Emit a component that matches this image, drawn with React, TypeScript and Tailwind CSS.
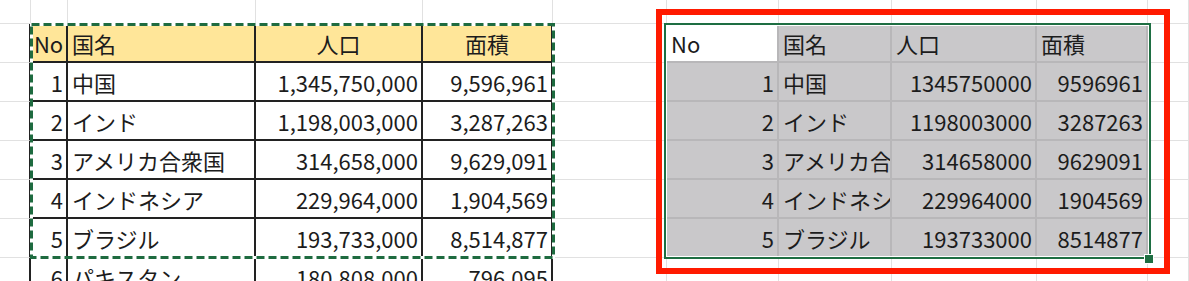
import type { ReactNode } from 'react'

const data = [
  ['1', '中国', '1,345,750,000', '9,596,961'],
  ['2', 'インド', '1,198,003,000', '3,287,263'],
  ['3', 'アメリカ合衆国', '314,658,000', '9,629,091'],
  ['4', 'インドネシア', '229,964,000', '1,904,569'],
  ['5', 'ブラジル', '193,733,000', '8,514,877'],
  ['6', 'パキスタン', '180,808,000', '796,095'],
]

const grid = 'border-r border-b border-[#e1e1e1]'
const boxed = 'border-r-2 border-b-2 border-[#222]'
const picked = 'bg-[#c9c8ca] border-r-2 border-b-2 border-[#b8b7b9]'

function Cell({
  className = grid,
  align = 'left',
  children,
}: {
  className?: string
  align?: 'left' | 'right' | 'center'
  children?: ReactNode
}) {
  const a =
    align === 'right' ? 'justify-end pr-[3px]' : align === 'center' ? 'justify-center' : 'justify-start pl-[4px]'
  return (
    <div className={`flex items-center overflow-hidden whitespace-nowrap leading-none ${a} ${className}`}>
      {children}
    </div>
  )
}

export default function App() {
  return (
    <div className="relative h-[281px] w-[1189px] overflow-hidden bg-white font-['Noto_Sans_CJK_JP',sans-serif] text-[22px] text-[#1c1c1c]">
      <div className="grid grid-cols-[31px_37px_188px_167px_130px_114px_112px_113px_145px_111px_41px] grid-rows-[24px_39px_39px_39px_39px_39px_39px_39px]">
        {/* top row */}
        {Array.from({ length: 11 }).map((_, i) => (
          <Cell key={`t${i}`} />
        ))}

        {/* header row */}
        <Cell className="border-r-2 border-b border-r-[#222] border-b-[#e1e1e1]" />
        <Cell className={`${boxed} bg-[#ffe699]`} align="center">No</Cell>
        <Cell className={`${boxed} bg-[#ffe699]`}>国名</Cell>
        <Cell className={`${boxed} bg-[#ffe699]`} align="center">人口</Cell>
        <Cell className={`${boxed} bg-[#ffe699]`} align="center">面積</Cell>
        <Cell />
        <Cell className="border-r-2 border-b-2 border-[#b8b7b9] bg-white">No</Cell>
        <Cell className={picked}>国名</Cell>
        <Cell className={picked}>人口</Cell>
        <Cell className={picked}>面積</Cell>
        <Cell />

        {data.map((r, i) => {
          const sel = i < 5
          const c = sel ? picked : grid
          return [
            <Cell key={`a${i}`} className="border-r-2 border-b border-r-[#222] border-b-[#e1e1e1]" />,
            <Cell key={`b${i}`} className={boxed} align="right">{r[0]}</Cell>,
            <Cell key={`c${i}`} className={boxed}>{r[1]}</Cell>,
            <Cell key={`d${i}`} className={boxed} align="right">{r[2]}</Cell>,
            <Cell key={`e${i}`} className={boxed} align="right">{r[3]}</Cell>,
            <Cell key={`f${i}`} />,
            <Cell key={`g${i}`} className={c} align="right">{sel ? r[0] : ''}</Cell>,
            <Cell key={`h${i}`} className={c}>{sel ? r[1] : ''}</Cell>,
            <Cell key={`i${i}`} className={c} align="right">{sel ? r[2].replace(/,/g, '') : ''}</Cell>,
            <Cell key={`j${i}`} className={c} align="right">{sel ? r[3].replace(/,/g, '') : ''}</Cell>,
            <Cell key={`k${i}`} />,
          ]
        })}
      </div>

      {/* copy marquee */}
      <svg className="pointer-events-none absolute left-0 top-0" width="1189" height="281">
        <rect x="31.5" y="24.5" width="522" height="233" fill="none" stroke="#fff" strokeWidth="3" />
        <rect x="31.5" y="24.5" width="522" height="233" fill="none" stroke="#1e6b40" strokeWidth="3" strokeDasharray="8 4" />
      </svg>

      {/* selection */}
      <div className="pointer-events-none absolute left-[664px] top-[23px] h-[236px] w-[487px] border-2 border-[#1e6e42] shadow-[inset_0_0_0_1px_#fff]" />
      <div className="absolute left-[1144px] top-[254px] size-[10px] border border-white bg-[#1e6e42]" />

      {/* red highlight */}
      <div className="pointer-events-none absolute left-[656px] top-[9px] h-[265px] w-[514px] border-[6px] border-[#ff1a00]" />
    </div>
  )
}
